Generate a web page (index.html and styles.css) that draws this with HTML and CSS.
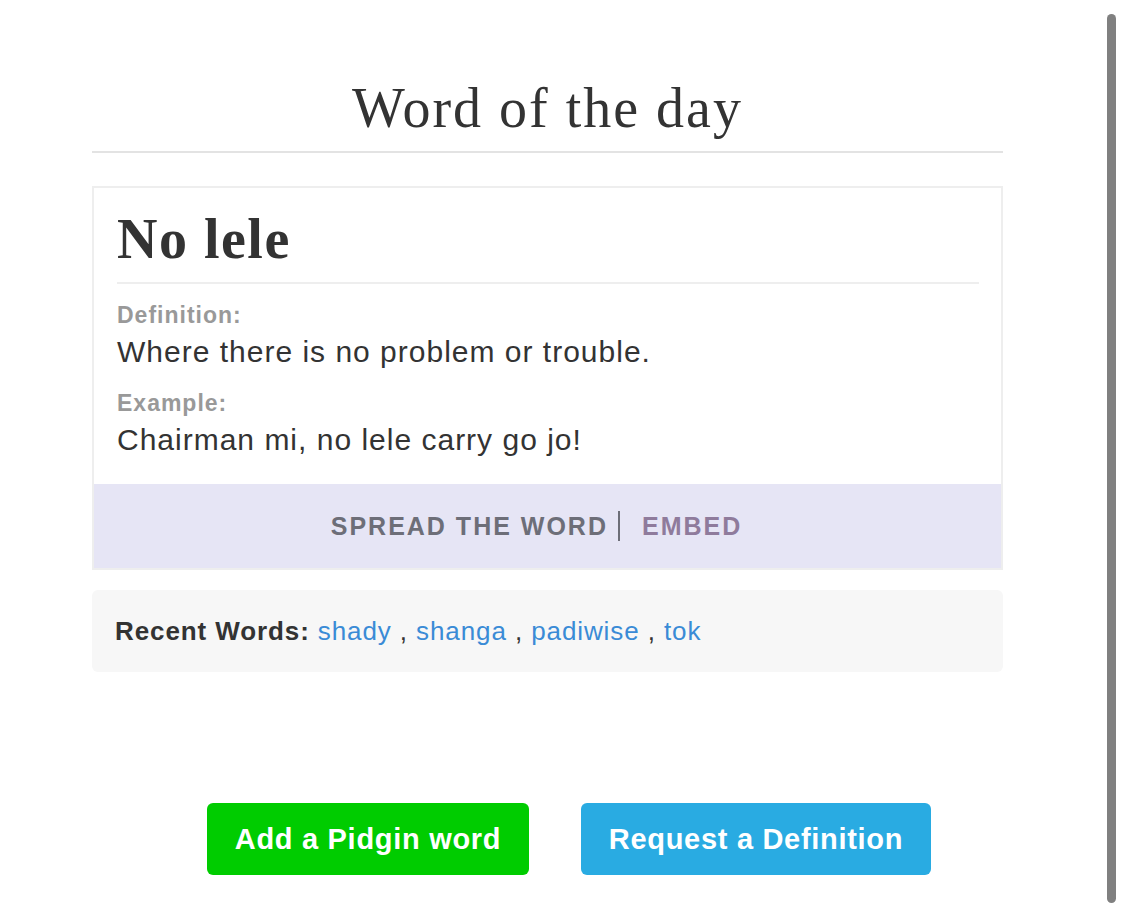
FILE: index.html
```html
<!DOCTYPE html>
<html>
<head>
<meta charset="utf-8">
<link rel="stylesheet" href="styles.css">
</head>
<body>
<main class="page">
  <h1 class="title">Word of the day</h1>
  <section class="card">
    <div class="card-body">
      <h2 class="word">No lele</h2>
      <div class="label">Definition:</div>
      <p class="text">Where there is no problem or trouble.</p>
      <div class="label label-example">Example:</div>
      <p class="text">Chairman mi, no lele carry go jo!</p>
    </div>
    <div class="card-foot">
      <span class="spread">SPREAD THE WORD</span><span class="sep"></span><span class="embed">EMBED</span>
    </div>
  </section>
  <section class="recent">
    <strong>Recent Words:</strong> <a href="#">shady</a> , <a href="#">shanga</a> , <a href="#">padiwise</a> , <a href="#">tok</a>
  </section>
  <div class="actions">
    <a class="btn btn-green" href="#">Add a Pidgin word</a>
    <a class="btn btn-blue" href="#">Request a Definition</a>
  </div>
</main>
<div class="scrollbar"></div>
</body>
</html>
```
FILE: styles.css
```css
html, body {
  margin: 0;
  padding: 0;
  background: #fff;
}
body {
  font-family: "Liberation Sans", Arial, sans-serif;
  color: #333;
  overflow: hidden;
}
.page {
  width: 911px;
  margin: 0 0 0 92px;
  padding-top: 78px;
}
.title {
  font-family: "Liberation Serif", serif;
  font-weight: normal;
  font-size: 56px;
  letter-spacing: 2px;
  line-height: 60px;
  text-align: center;
  margin: 0;
  padding-bottom: 13px;
  border-bottom: 2px solid #e3e3e3;
  color: #333;
}
.card {
  margin-top: 33px;
  border: 2px solid #eeeeee;
}
.card-body {
  padding: 20px 22px 26px 23px;
}
.word {
  font-family: "Liberation Serif", serif;
  font-weight: bold;
  font-size: 56px;
  letter-spacing: 1.5px;
  line-height: 62px;
  margin: 0 0 17px;
  padding-bottom: 12px;
  border-bottom: 2px solid #eeeeee;
  color: #333;
}
.label {
  font-size: 23px;
  letter-spacing: 1px;
  font-weight: bold;
  color: #999;
  line-height: 28px;
}
.label-example { margin-top: 19px; }
.text {
  margin: 5px 0 0;
  font-size: 30px;
  letter-spacing: 1px;
  line-height: 36px;
  color: #333;
}
.card-foot {
  background: #e6e5f5;
  height: 84px;
  display: flex;
  align-items: center;
  justify-content: center;
  padding-right: 22px;
  font-weight: bold;
  font-size: 25px;
  letter-spacing: 2px;
}
.spread { color: #6d6e78; }
.sep {
  width: 2px;
  height: 30px;
  background: #6d6e78;
  margin: 0 22px 0 10px;
}
.embed { color: #8f7b9c; }
.recent {
  margin-top: 20px;
  background: #f7f7f7;
  border-radius: 6px;
  height: 82px;
  line-height: 82px;
  box-sizing: border-box;
  padding: 0 23px;
  font-size: 26px;
  letter-spacing: 0.9px;
  color: #333;
}
.recent strong { color: #333; }
.recent a {
  color: #3a8bd6;
  text-decoration: none;
}
.actions {
  display: flex;
  justify-content: center;
  gap: 52px;
  margin-top: 131px;
  padding-left: 43px;
}
.btn {
  display: flex;
  align-items: center;
  justify-content: center;
  height: 72px;
  border-radius: 6px;
  color: #fff;
  font-weight: bold;
  font-size: 29px;
  letter-spacing: 0.7px;
  text-decoration: none;
}
.btn-green { background: #00cc00; width: 322px; }
.btn-blue { background: #29abe2; width: 350px; }
.scrollbar {
  position: fixed;
  left: 1107px;
  top: 14px;
  width: 9px;
  height: 889px;
  background: #808080;
  border-radius: 5px;
}
```
